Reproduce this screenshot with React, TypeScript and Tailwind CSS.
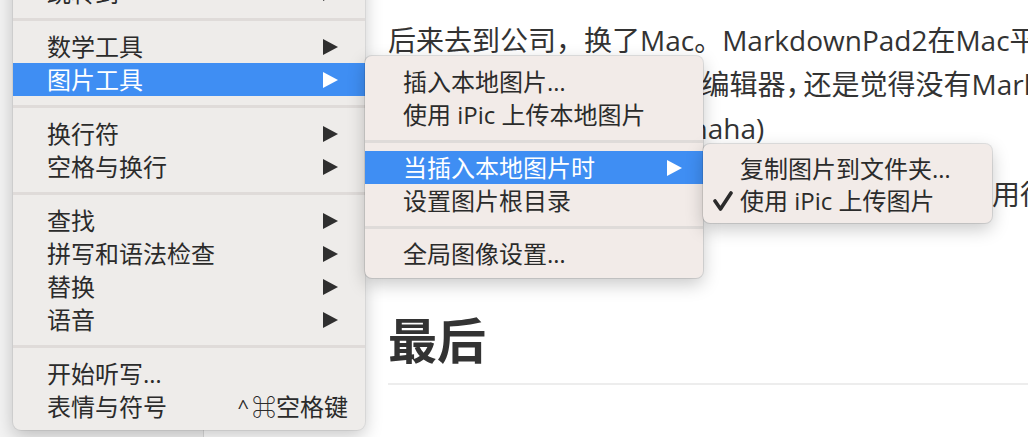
import React from "react";

type MenuEntry =
  | { kind: "sep" }
  | { kind: "item"; label: string; arrow?: boolean; active?: boolean; shortcut?: string };

const mainMenu: MenuEntry[] = [
  { kind: "item", label: "跳转到", arrow: true },
  { kind: "sep" },
  { kind: "item", label: "数学工具", arrow: true },
  { kind: "item", label: "图片工具", arrow: true, active: true },
  { kind: "sep" },
  { kind: "item", label: "换行符", arrow: true },
  { kind: "item", label: "空格与换行", arrow: true },
  { kind: "sep" },
  { kind: "item", label: "查找", arrow: true },
  { kind: "item", label: "拼写和语法检查", arrow: true },
  { kind: "item", label: "替换", arrow: true },
  { kind: "item", label: "语音", arrow: true },
  { kind: "sep" },
  { kind: "item", label: "开始听写…" },
  { kind: "item", label: "表情与符号", shortcut: "⌘空格键" },
];

const imageMenu: MenuEntry[] = [
  { kind: "item", label: "插入本地图片…" },
  { kind: "item", label: "使用 iPic 上传本地图片" },
  { kind: "sep" },
  { kind: "item", label: "当插入本地图片时", arrow: true, active: true },
  { kind: "item", label: "设置图片根目录" },
  { kind: "sep" },
  { kind: "item", label: "全局图像设置…" },
];

const Arrow = ({ white }: { white?: boolean }) => (
  <svg width="15" height="16" viewBox="0 0 15 16" className="shrink-0">
    <polygon points="0,0 15,8 0,16" fill={white ? "#ffffff" : "#2f2f2f"} />
  </svg>
);

const Check = () => (
  <svg width="20" height="21" viewBox="0 0 20 21" className="absolute left-[10px] top-[6px]">
    <path d="M2 10 L7.5 18 L18 2" fill="none" stroke="#2b2b2b" strokeWidth="3.6" strokeLinecap="round" strokeLinejoin="round" />
  </svg>
);

const menuFont = { fontFamily: '"Open Sans", "Noto Sans CJK SC", "DejaVu Sans", sans-serif' };

const Menu = ({
  entries,
  sepClass,
  padLeft,
  padRight,
}: {
  entries: MenuEntry[];
  sepClass: string;
  padLeft: string;
  padRight: string;
}) => (
  <>
    {entries.map((e, i) =>
      e.kind === "sep" ? (
        <div key={i} className={`flex items-center ${sepClass}`}>
          <div className="h-[3px] w-full bg-[#dfdbd9]" />
        </div>
      ) : (
        <div
          key={i}
          className={`flex h-[33px] items-center text-[24px] leading-[33px] ${padLeft} ${
            e.shortcut ? "pr-[17px]" : padRight
          } ${e.active ? "bg-[#3f8ef3] text-white" : "text-[#2b2b2b]"}`}
        >
          <span className="flex-1 whitespace-nowrap">{e.label}</span>
          {e.arrow && <Arrow white={e.active} />}
          {e.shortcut && (
            <span className="flex items-center whitespace-nowrap">
              <span className="mr-[3px] text-[20px]">^</span>
              {e.shortcut}
            </span>
          )}
        </div>
      )
    )}
  </>
);

export default function App() {
  const docFont = { fontFamily: '"Open Sans", "Noto Sans CJK SC", sans-serif' };

  return (
    <div className="relative flex h-[437px] w-[1028px] overflow-hidden bg-white">
      <aside className="w-[204px] shrink-0 border-r border-[#dcdcdc] bg-[#f3f3f3]" />

      <main className="flex min-w-0 flex-1 flex-col pl-[184px] pt-[18px] text-[#333333]" style={docFont}>
        <p className="whitespace-nowrap text-[28px] leading-[44px]">
          后来去到公司，换了Mac。MarkdownPad2在Mac平
          <br />
          台上没有，试了下Mac 的编辑器<span className="mr-[-10px]">，</span>还是觉得没有MarkdownPad2好用
          <br />
          Pad2那么顺手好用的(hahaha)
        </p>
        <p className="mt-[22px] whitespace-nowrap text-[28px] leading-[44px]">
          这2年一直在用这款编辑器，写起来越来越觉得好用得心应手，
          <br />
          推荐给大家。
        </p>
        <h2 className="mt-[50px] border-b-2 border-[#ededed] pb-[13px] text-[49px] font-bold leading-[60px]">
          最后
        </h2>
      </main>

      {/* main context menu */}
      <div
        className="absolute left-[13px] top-[-33px] w-[352px] rounded-b-[8px] bg-[#eeecea] pb-[7px] pt-[9px] shadow-[0_0_0_1px_rgba(0,0,0,0.06),0_6px_18px_rgba(0,0,0,0.22)]"
        style={menuFont}
      >
        <Menu entries={mainMenu} sepClass="h-[21px]" padLeft="pl-[34px]" padRight="pr-[27px]" />
      </div>

      {/* 图片工具 submenu */}
      <div
        className="absolute left-[365px] top-[56px] w-[338px] rounded-[7px] bg-[#f2ebe8] pb-[8px] pt-[9px] shadow-[0_0_0_1px_rgba(0,0,0,0.1),0_6px_18px_rgba(0,0,0,0.22)]"
        style={menuFont}
      >
        <Menu entries={imageMenu} sepClass="h-[20px]" padLeft="pl-[38px]" padRight="pr-[21px]" />
      </div>

      {/* 当插入本地图片时 submenu */}
      <div
        className="absolute left-[703px] top-[144px] w-[289px] rounded-[7px] bg-[#f2ebe8] pb-[6px] pt-[9px] text-[24px] text-[#2b2b2b] shadow-[0_0_0_1px_rgba(0,0,0,0.1),0_6px_18px_rgba(0,0,0,0.22)]"
        style={menuFont}
      >
        <div className="flex h-[32px] items-center whitespace-nowrap pl-[37px] leading-[32px]">复制图片到文件夹…</div>
        <div className="relative flex h-[32px] items-center whitespace-nowrap pl-[37px] leading-[32px]">
          <Check />
          使用 iPic 上传图片
        </div>
      </div>
    </div>
  );
}
